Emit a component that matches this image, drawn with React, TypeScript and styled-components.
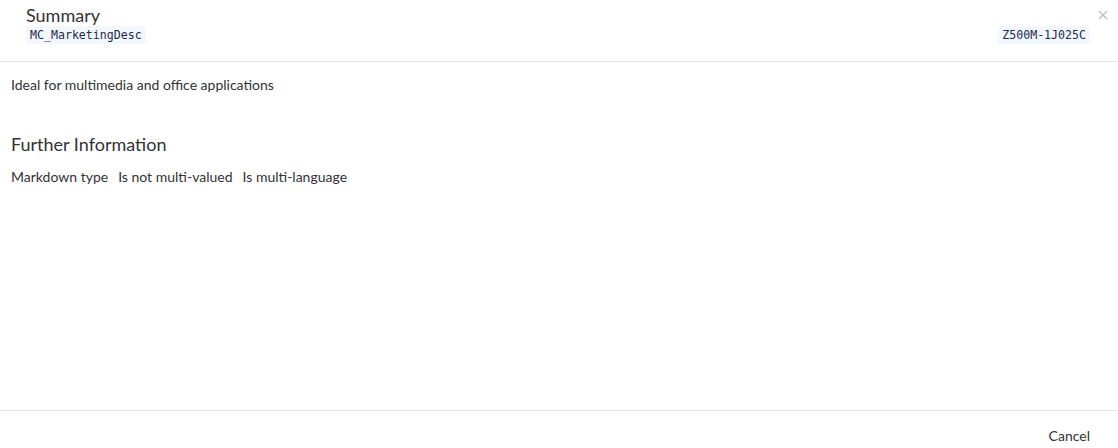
import React from "react";
import styled, { createGlobalStyle } from "styled-components";

const Global = createGlobalStyle`
  html, body { margin: 0; padding: 0; background: #fff; }
  body { font-family: Lato, "Open Sans", sans-serif; color: #333; }
  #root { height: 448px; }
`;

const Dialog = styled.div`
  position: relative;
  height: 448px;
  display: flex;
  flex-direction: column;
  background: #fff;
`;

const Header = styled.header`
  padding: 5px 28px 17px 26px;
  border-bottom: 1px solid #e5e5e5;
  display: flex;
  flex-direction: column;
`;

const Title = styled.h2`
  margin: 0;
  font-size: 18px;
  line-height: 21px;
  font-weight: 400;
  color: #333;
`;

const SubRow = styled.div`
  display: flex;
  justify-content: space-between;
  align-items: center;
`;

const Code = styled.code`
  display: inline-block;
  font-family: "DejaVu Sans Mono", "Liberation Mono", monospace;
  font-size: 11.6px;
  line-height: 18px;
  color: #1f2a4d;
  background: #f3f8ff;
  padding: 0 4px;
  white-space: nowrap;
`;

const Close = styled.button`
  position: absolute;
  top: 7px;
  right: 7px;
  width: 16px;
  height: 16px;
  padding: 0;
  border: 0;
  background: transparent;
  display: flex;
  align-items: center;
  justify-content: center;
  cursor: pointer;
`;

const Body = styled.main`
  flex: 1;
  padding: 14px 11px;
`;

const Text = styled.p`
  margin: 0;
  font-size: 14px;
  line-height: 18px;
`;

const SectionTitle = styled.h3`
  margin: 39px 0 0;
  font-size: 18px;
  line-height: 22px;
  font-weight: 400;
`;

const Meta = styled.div`
  margin-top: 13px;
  display: flex;
  gap: 10px;
  font-size: 14px;
  line-height: 18px;
`;

const Footer = styled.footer`
  border-top: 1px solid #e5e5e5;
  height: 37px;
  display: flex;
  justify-content: flex-end;
  align-items: flex-end;
  padding-right: 20px;
`;

const CancelButton = styled.button`
  border: 0;
  background: transparent;
  font-family: Lato, sans-serif;
  font-size: 14px;
  line-height: 18px;
  color: #333;
  padding: 0 8px 3px;
  cursor: pointer;
`;

export default function App() {
  return (
    <>
      <Global />
      <Dialog>
        <Header>
          <Title>Summary</Title>
          <SubRow>
            <Code>MC_MarketingDesc</Code>
            <Code>Z500M-1J025C</Code>
          </SubRow>
        </Header>
        <Close aria-label="Close">
          <svg width="10" height="10" viewBox="0 0 10 10">
            <path d="M1 1 L9 9 M9 1 L1 9" stroke="#c4c4c4" strokeWidth="1.6" />
          </svg>
        </Close>
        <Body>
          <Text>Ideal for multimedia and office applications</Text>
          <SectionTitle>Further Information</SectionTitle>
          <Meta>
            <span>Markdown type</span>
            <span>Is not multi-valued</span>
            <span>Is multi-language</span>
          </Meta>
        </Body>
        <Footer>
          <CancelButton>Cancel</CancelButton>
        </Footer>
      </Dialog>
    </>
  );
}
